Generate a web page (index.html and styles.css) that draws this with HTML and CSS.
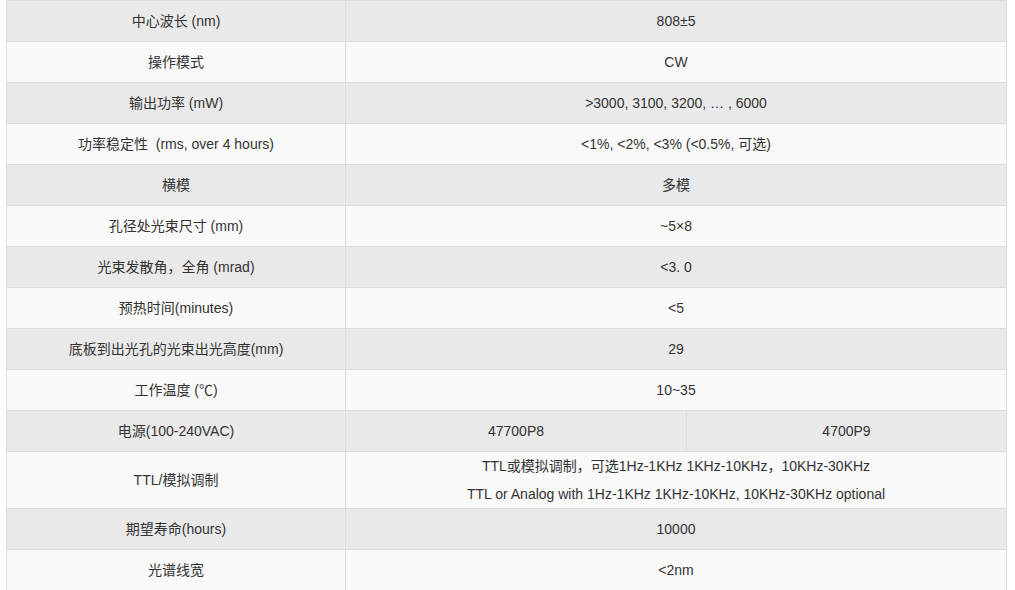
FILE: index.html
```html
<!DOCTYPE html>
<html lang="zh">
<head>
<meta charset="utf-8">
<title>参数表</title>
<link rel="stylesheet" href="styles.css">
</head>
<body>
<div class="wrap">
<table class="spec">
<colgroup><col class="c1"><col class="c2"><col class="c3"></colgroup>
<tbody>
<tr><td>中心波长 (nm)</td><td colspan="2">808±5</td></tr>
<tr><td>操作模式</td><td colspan="2">CW</td></tr>
<tr><td>输出功率 (mW)</td><td colspan="2">&gt;3000, 3100, 3200, … , 6000</td></tr>
<tr><td>功率稳定性&nbsp; (rms, over 4 hours)</td><td colspan="2">&lt;1%, &lt;2%, &lt;3% (&lt;0.5%, 可选)</td></tr>
<tr><td>横模</td><td colspan="2">多模</td></tr>
<tr><td>孔径处光束尺寸 (mm)</td><td colspan="2">~5×8</td></tr>
<tr><td>光束发散角，全角 (mrad)</td><td colspan="2">&lt;3. 0</td></tr>
<tr><td>预热时间(minutes)</td><td colspan="2">&lt;5</td></tr>
<tr><td>底板到出光孔的光束出光高度(mm)</td><td colspan="2">29</td></tr>
<tr><td>工作温度 (℃)</td><td colspan="2">10~35</td></tr>
<tr><td>电源(100-240VAC)</td><td>47700P8</td><td>4700P9</td></tr>
<tr class="tall"><td>TTL/模拟调制</td><td colspan="2"><div class="ln">TTL或模拟调制，可选1Hz-1KHz 1KHz-10KHz，10KHz-30KHz</div><div class="ln">TTL or Analog with 1Hz-1KHz 1KHz-10KHz, 10KHz-30KHz optional</div></td></tr>
<tr><td>期望寿命(hours)</td><td colspan="2">10000</td></tr>
<tr><td>光谱线宽</td><td colspan="2">&lt;2nm</td></tr>
</tbody>
</table>
</div>
</body>
</html>
```
FILE: styles.css
```css
html, body {
  margin: 0;
  padding: 0;
  background: #ffffff;
}
.wrap {
  padding: 0 0 0 6px;
}
.spec {
  border-collapse: collapse;
  table-layout: fixed;
  width: 1000px;
  font-family: "Liberation Sans", Arial, "Noto Sans CJK SC", sans-serif;
  font-size: 14px;
  color: #333333;
}
.c1 { width: 339px; }
.c2 { width: 341px; }
.c3 { width: 320px; }
.spec td {
  border: 1px solid #dddddd;
  padding: 0 8px;
  height: 40px;
  line-height: 40px;
  text-align: center;
  vertical-align: middle;
  white-space: nowrap;
}
.spec tr:nth-child(odd) td { background: #e9e9e9; }
.spec tr:nth-child(even) td { background: #f9f9f9; }
.spec tr.tall td { height: 56px; line-height: 28px; }
.ln { line-height: 28px; }
```
